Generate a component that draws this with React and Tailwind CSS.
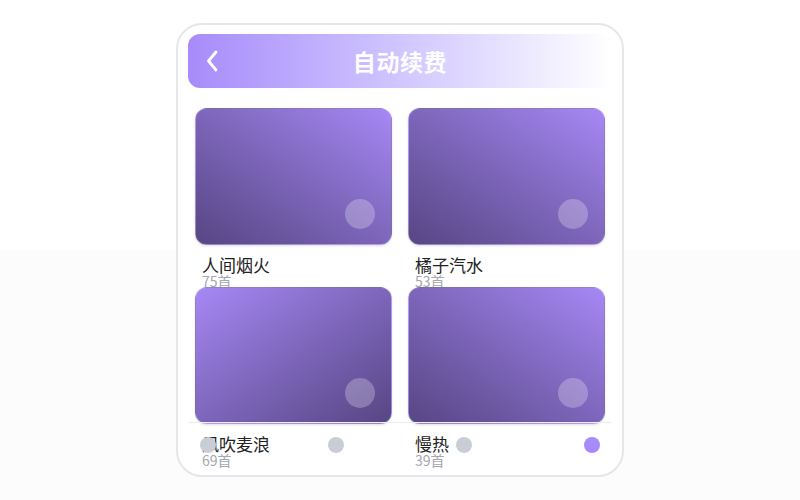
const playlists = [
  { name: '人间烟火', count: 75, dir: 'bg-gradient-to-tr from-[#574684] to-[#a688f5]' },
  { name: '橘子汽水', count: 53, dir: 'bg-gradient-to-tr from-[#574684] to-[#a688f5]' },
  { name: '风吹麦浪', count: 69, dir: 'bg-gradient-to-br from-[#a688f5] to-[#574684]' },
  { name: '慢热', count: 39, dir: 'bg-gradient-to-tr from-[#574684] to-[#a688f5]' },
];

function ChevronBack() {
  return (
    <svg width="14" height="24" viewBox="0 0 14 24" fill="none">
      <polyline
        points="11,3 3.5,12 11,21"
        stroke="white"
        strokeWidth="2.8"
        strokeLinecap="round"
        strokeLinejoin="round"
      />
    </svg>
  );
}

function Card({ item }) {
  return (
    <div>
      <div className={`relative h-[137px] rounded-xl border border-white/20 shadow-sm ${item.dir}`}>
        <div className="absolute right-[16px] bottom-[15px] w-[30px] h-[30px] rounded-full bg-white/25" />
      </div>
      <div className="h-[42px] px-[7px] pt-[10px]">
        <div className="text-[17px] leading-[19px] text-[#222]">{item.name}</div>
        <div className="text-[14px] leading-[14px] text-[#a3a7ae]">{item.count}首</div>
      </div>
    </div>
  );
}

export default function App() {
  return (
    <div
      className="h-screen w-full flex items-center justify-center bg-[linear-gradient(to_bottom,#ffffff_50%,#fcfcfd_50%)]"
      style={{ fontFamily: '"Noto Sans CJK SC", "Noto Sans", sans-serif' }}
    >
      <div className="relative w-[448px] h-[454px] rounded-[26px] border-2 border-[#e6e7eb] bg-white px-[10px] pt-[9px] overflow-hidden">
        {/* header */}
        <div className="relative h-[54px] rounded-xl bg-gradient-to-r from-[#a78bfa] to-white flex items-center justify-center">
          <div className="absolute left-[17px] top-[15px]">
            <ChevronBack />
          </div>
          <h1 className="text-[23px] font-bold text-white tracking-wide">自动续费</h1>
        </div>

        {/* list */}
        <div className="grid grid-cols-2 gap-x-4 px-[7px] pt-[20px]">
          {playlists.map((p) => (
            <Card key={p.name} item={p} />
          ))}
        </div>

        {/* bottom nav */}
        <div className="absolute left-[10px] right-[10px] bottom-[9px] h-[44px] border-t border-[#eceef2] flex items-center justify-between px-3">
          <span className="w-4 h-4 rounded-full bg-[#c9ced6]" />
          <span className="w-4 h-4 rounded-full bg-[#c9ced6]" />
          <span className="w-4 h-4 rounded-full bg-[#c9ced6]" />
          <span className="w-4 h-4 rounded-full bg-[#a78bfa]" />
        </div>
      </div>
    </div>
  );
}
